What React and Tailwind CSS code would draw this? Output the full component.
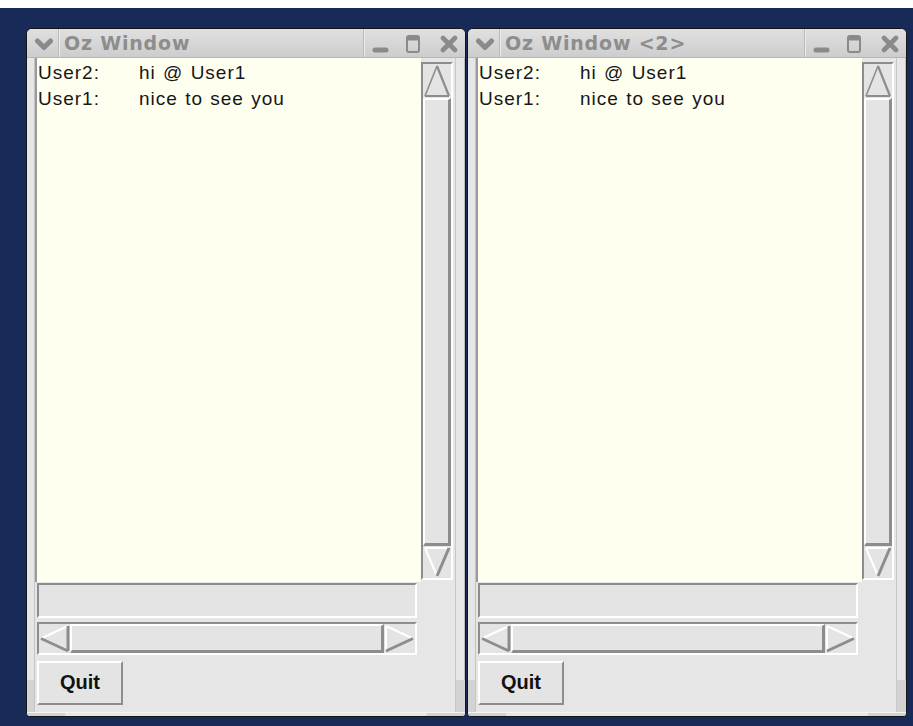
import React from "react";

const SHADOW = "#8d8d8d";
const LIGHT = "#ffffff";
const FACE = "#e4e4e4";

function Chevron() {
  return (
    <svg width="20" height="14" viewBox="0 0 20 14">
      <path d="M3.5 4 L10 10.5 L16.5 4" fill="none" stroke="#8a8a8a" strokeWidth="5" strokeLinecap="round" strokeLinejoin="round" />
    </svg>
  );
}

function MinIcon() {
  return (
    <svg width="17" height="6" viewBox="0 0 17 6">
      <rect x="0.5" y="0.5" width="16" height="5" rx="2.5" fill="#8a8a8a" />
    </svg>
  );
}

function MaxIcon() {
  return (
    <svg width="14" height="18" viewBox="0 0 14 18">
      <rect x="1" y="1" width="12" height="16" rx="2" fill="none" stroke="#8a8a8a" strokeWidth="2" />
      <rect x="1" y="1" width="12" height="4.5" rx="1.5" fill="#8a8a8a" />
    </svg>
  );
}

function CloseIcon() {
  return (
    <svg width="18" height="18" viewBox="0 0 18 18">
      <path d="M3 3 L15 15 M15 3 L3 15" stroke="#8a8a8a" strokeWidth="4.6" strokeLinecap="round" />
    </svg>
  );
}

function TitleBar({ title }) {
  return (
    <div className="flex h-[29px] bg-gradient-to-b from-[#e0e0e0] to-[#cdcdcd] border-b border-[#b5b5b5]">
      <div className="w-[31px] flex items-center pl-[7px] pt-[1px]">
        <Chevron />
      </div>
      <div className="w-px bg-[#bababa]" />
      <div className="w-px bg-[#ececec]" />
      <div className="flex-1 flex items-center pl-[4px] text-[19px] font-bold tracking-[0.8px] text-[#8d8d8d] [font-family:'DejaVu_Sans',sans-serif]">
        {title}
      </div>
      <div className="w-px bg-[#bababa]" />
      <div className="w-px bg-[#ececec]" />
      <div className="w-[100px] flex items-center pl-[7px] pt-[1px]">
        <div className="w-[17px] pt-[12px]">
          <MinIcon />
        </div>
        <div className="ml-[17px]">
          <MaxIcon />
        </div>
        <div className="ml-[20px]">
          <CloseIcon />
        </div>
      </div>
    </div>
  );
}

function UpArrow() {
  return (
    <svg width="28" height="34" viewBox="0 0 28 34" className="block">
      <polygon points="14,2 2,32 26,32" fill={FACE} />
      <line x1="2" y1="32" x2="14" y2="2" stroke={SHADOW} strokeWidth="1.6" />
      <line x1="14" y1="2" x2="26" y2="32" stroke={SHADOW} strokeWidth="2.2" />
      <line x1="2" y1="32" x2="26" y2="32" stroke={SHADOW} strokeWidth="2.2" />
    </svg>
  );
}

function DownArrow() {
  return (
    <svg width="28" height="32" viewBox="0 0 28 32" className="block">
      <polygon points="2,2 26,2 14,30" fill={FACE} />
      <line x1="2" y1="2" x2="26" y2="2" stroke={LIGHT} strokeWidth="2" />
      <line x1="2" y1="2" x2="14" y2="30" stroke={LIGHT} strokeWidth="2" />
      <line x1="26" y1="2" x2="14" y2="30" stroke={SHADOW} strokeWidth="3" />
    </svg>
  );
}

function LeftArrow() {
  return (
    <svg width="31" height="29" viewBox="0 0 31 29" className="block">
      <polygon points="2,14.5 29,2 29,27" fill={FACE} />
      <line x1="2" y1="14.5" x2="29" y2="2" stroke={LIGHT} strokeWidth="2" />
      <line x1="29" y1="2" x2="29" y2="27" stroke={SHADOW} strokeWidth="3" />
      <line x1="2" y1="14.5" x2="29" y2="27" stroke={SHADOW} strokeWidth="2.6" />
    </svg>
  );
}

function RightArrow() {
  return (
    <svg width="31" height="29" viewBox="0 0 31 29" className="block">
      <polygon points="2,2 29,14.5 2,27" fill={FACE} />
      <line x1="2" y1="2" x2="2" y2="27" stroke={LIGHT} strokeWidth="2" />
      <line x1="2" y1="2" x2="29" y2="14.5" stroke={LIGHT} strokeWidth="2" />
      <line x1="2" y1="27" x2="29" y2="14.5" stroke={SHADOW} strokeWidth="3" />
    </svg>
  );
}

function VScroll() {
  return (
    <div className="w-[34px] pt-[4px] pb-[2px] pr-[2px] flex">
      <div className="flex-1 flex flex-col border-2 border-t-[#8d8d8d] border-l-[#8d8d8d] border-b-white border-r-white bg-[#e4e4e4]">
        <UpArrow />
        <div className="flex-1 border-2 border-t-white border-l-white border-r-[#8d8d8d] border-b-[#8d8d8d] border-r-[3px] border-b-[3px]" />
        <DownArrow />
      </div>
    </div>
  );
}

function HScroll() {
  return (
    <div className="w-[380px] h-[33px] flex border-2 border-t-[#8d8d8d] border-l-[#8d8d8d] border-b-white border-r-white bg-[#e4e4e4]">
      <LeftArrow />
      <div className="flex-1 border-2 border-t-white border-l-white border-r-[#8d8d8d] border-b-[#8d8d8d] border-r-[3px] border-b-[3px]" />
      <RightArrow />
    </div>
  );
}

const lines = [
  ["User2:", "hi @ User1"],
  ["User1:", "nice to see you"],
];

function ChatWindow({ title }) {
  return (
    <div className="w-[440px] h-[689px] flex flex-col border border-[#151515] rounded-t-[6px] rounded-b-[4px] overflow-hidden bg-[#e6e6e6]">
      <TitleBar title={title} />
      <div className="flex flex-1">
        {/* left frame edge with resize grip */}
        <div className="w-[8px] flex flex-col border-r border-[#c4c4c4]">
          <div className="flex-1" />
          <div className="h-[32px] bg-[#d3d3d3]" />
        </div>
        <div className="w-[420px] flex flex-col">
          <div className="flex h-[524px]">
            <div className="w-[386px] bg-[#fffff0] border-l-2 border-[#9a9a9a] pt-[2px] pl-[1px] text-[19px] leading-[26px] tracking-[1px] [word-spacing:1px] text-[#161616] [font-family:'Liberation_Sans',Arial,sans-serif]">
              {lines.map(([who, msg]) => (
                <div key={who + msg} className="flex">
                  <span className="w-[101px]">{who}</span>
                  <span>{msg}</span>
                </div>
              ))}
            </div>
            <VScroll />
          </div>
          <div className="pl-[2px] pt-[1px]">
            <div className="w-[380px] h-[35px] bg-[#e4e4e4] border-2 border-t-[#8d8d8d] border-l-[#8d8d8d] border-b-white border-r-white" />
          </div>
          <div className="pl-[2px] pt-[4px]">
            <HScroll />
          </div>
          <div className="pl-[2px] pt-[6px]">
            <button className="w-[86px] h-[44px] flex items-center justify-center pb-[3px] bg-[#e4e4e4] border-2 border-t-white border-l-white border-r-[#8d8d8d] border-b-[#8d8d8d] text-[20px] font-bold text-[#111] [font-family:'Liberation_Sans',Arial,sans-serif]">
              Quit
            </button>
          </div>
        </div>
        {/* right frame edge with resize grip */}
        <div className="w-[10px] flex flex-col border-l border-[#c8c8c8] pl-[5px]">
          <div className="flex-1 border-r border-[#bdbdbd]" />
          <div className="h-[32px] bg-[#d3d3d3] -ml-[5px]" />
        </div>
      </div>
      {/* bottom frame edge */}
      <div className="h-[4px] flex border-t border-[#f4f4f4]">
        <div className="w-[38px] bg-[#d3d3d3]" />
        <div className="flex-1" />
        <div className="w-[38px] bg-[#d3d3d3]" />
      </div>
    </div>
  );
}

export default function App() {
  return (
    <div className="w-[913px] h-[726px] bg-[#182a57] flex flex-col overflow-hidden">
      <div className="h-[8px] bg-white" />
      <div className="flex pl-[26px] pt-[20px] gap-[1px]">
        <ChatWindow title="Oz Window" />
        <ChatWindow title="Oz Window <2>" />
      </div>
    </div>
  );
}
